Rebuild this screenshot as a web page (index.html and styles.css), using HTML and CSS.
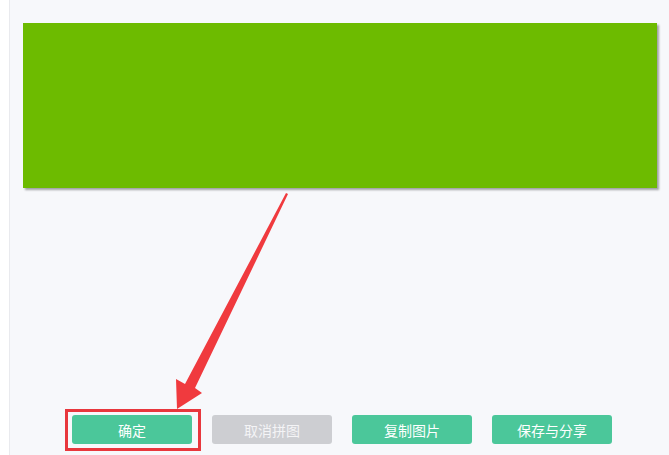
FILE: index.html
```html
<!DOCTYPE html>
<html lang="zh-CN">
<head>
    <meta charset="UTF-8">
    <title>拼图</title>
    <link rel="stylesheet" href="styles.css">
</head>
<body>

<div class="panel">
    <div class="canvas"></div>

    <div class="actions">
        <button type="button" class="btn btn-ok">确定</button>
        <button type="button" class="btn btn-off">取消拼图</button>
        <button type="button" class="btn">复制图片</button>
        <button type="button" class="btn">保存与分享</button>
    </div>
</div>

<!-- annotation: red frame + arrow pointing at the confirm button -->
<div class="mark-box"></div>
<svg class="mark-arrow" width="669" height="455" viewBox="0 0 669 455">
    <polygon points="286,193 288,194 195,388 202,393 177,409 176,379 185,384" fill="#f03a3e"/>
</svg>

</body>
</html>
```

FILE: styles.css
```css
html, body {
    margin: 0;
    height: 100%;
    background: #fff;
    font-family: "Noto Sans CJK SC", "Noto Sans", sans-serif;
    overflow: hidden;
}
.panel {
    margin-left: 9px;
    height: 455px;
    box-sizing: border-box;
    border-left: 1px solid #e9eaee;
    background: #f7f8fb;
    padding: 23px 0 0 13px;
}
.canvas {
    width: 634px;
    height: 165px;
    background: #6dbb00;
    box-shadow: 2px 2px 2px rgba(0, 0, 0, 0.35);
}
.actions {
    display: flex;
    gap: 20px;
    margin-top: 227px;
    padding-left: 49px;
}
.btn {
    width: 120px;
    height: 29px;
    border: none;
    border-radius: 3px;
    background: #4bc79a;
    color: #fff;
    font-family: inherit;
    font-size: 14px;
    padding: 0;
}
.btn-off {
    background: #cdced2;
    color: #f4f4f6;
}
.mark-box {
    position: absolute;
    left: 65px;
    top: 409px;
    width: 130px;
    height: 36px;
    border: 3px solid #e8373d;
}
.mark-arrow {
    position: absolute;
    left: 0;
    top: 0;
    pointer-events: none;
}
```
